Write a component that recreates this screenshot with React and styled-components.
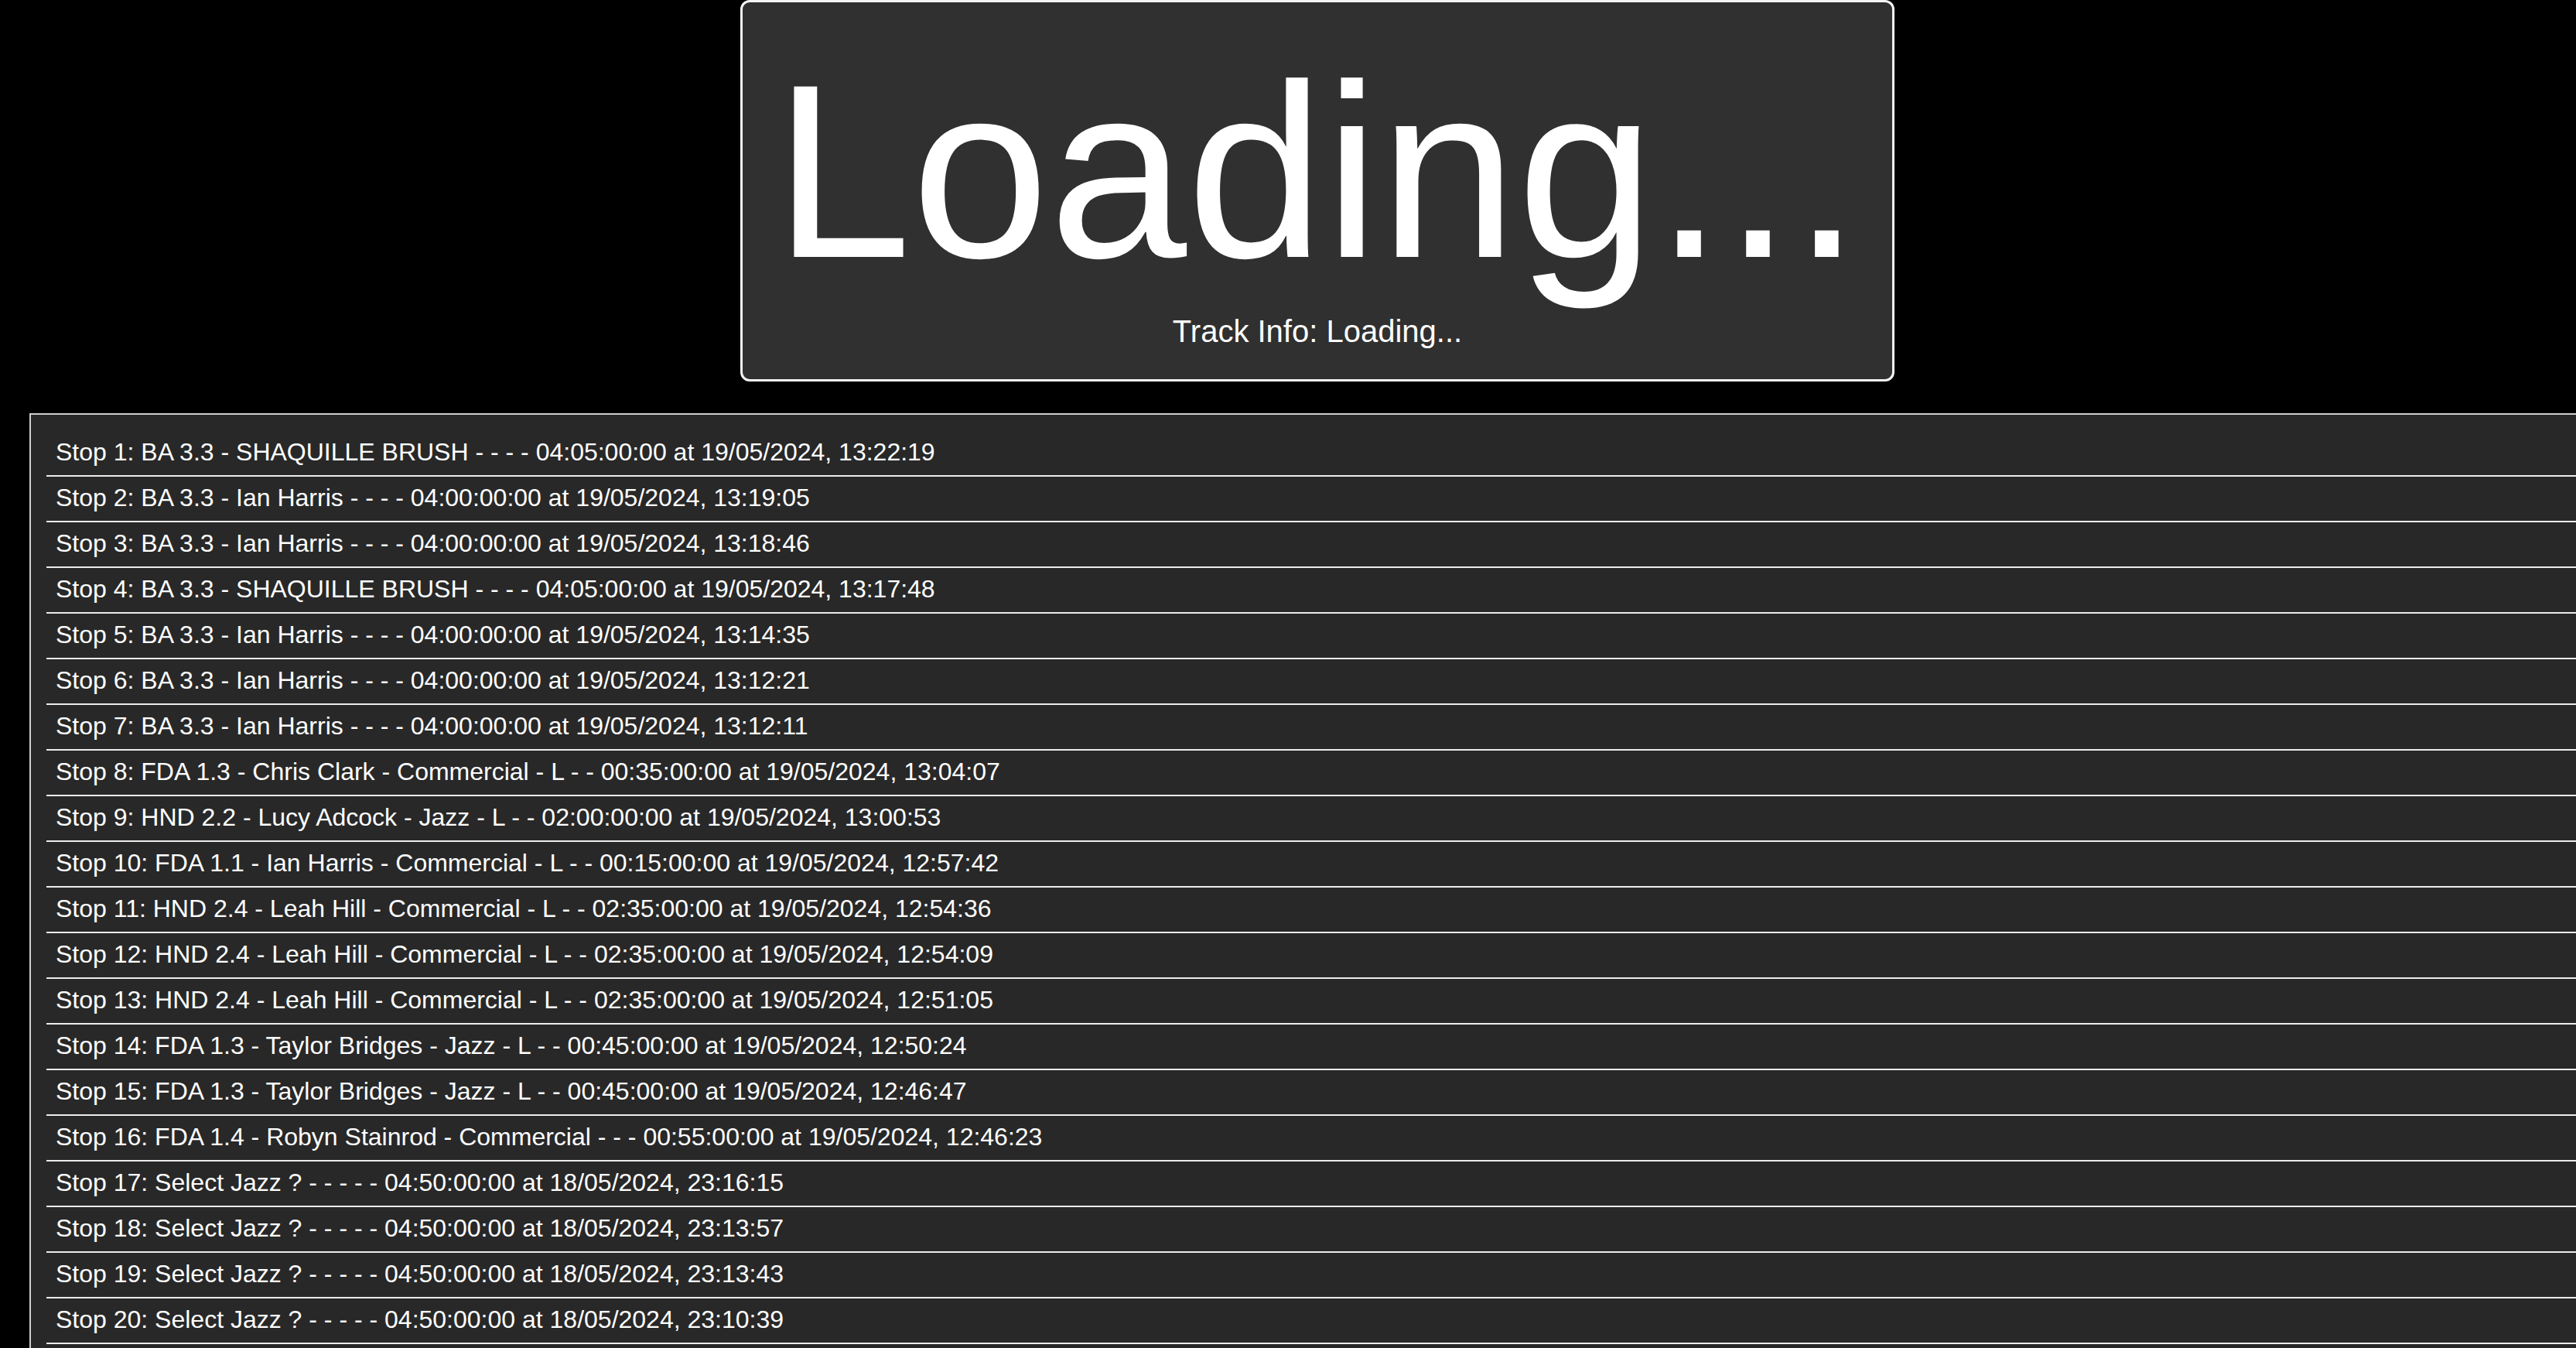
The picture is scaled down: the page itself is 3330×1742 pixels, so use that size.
import React from 'react';
import styled, { createGlobalStyle } from 'styled-components';

const GlobalStyle = createGlobalStyle`
  html, body {
    margin: 0;
    padding: 0;
    background: #000;
    color: #fff;
    font-family: 'Liberation Sans', Arial, Helvetica, sans-serif;
  }
`;

const Page = styled.div`
  width: 3406px;
  display: flex;
  flex-direction: column;
  align-items: center;
`;

const NowPlaying = styled.div`
  box-sizing: border-box;
  padding: 58px 40px 39px;
  background: #303030;
  border: 3px solid #f4f4f4;
  border-radius: 12px;
  text-align: center;
`;

const Title = styled.h1`
  margin: 0;
  font-size: 320px;
  font-weight: normal;
  line-height: 1;
  white-space: nowrap;
`;

const TrackInfo = styled.p`
  margin: 24px 0 0;
  font-size: 40px;
  line-height: 46px;
`;

const StopList = styled.ul`
  box-sizing: border-box;
  align-self: stretch;
  margin: 41px 0 0 38px;
  padding: 21px 0 20px 20px;
  list-style: none;
  background: #282828;
  border: 2px solid #cfcfcf;
  border-right: none;
`;

const Stop = styled.li`
  padding: 9px 12px 11px;
  font-size: 32px;
  line-height: 37px;
  border-bottom: 2px solid #ececec;
  white-space: nowrap;
`;

const stops = [
  'BA 3.3 - SHAQUILLE BRUSH - - - - 04:05:00:00 at 19/05/2024, 13:22:19',
  'BA 3.3 - Ian Harris - - - - 04:00:00:00 at 19/05/2024, 13:19:05',
  'BA 3.3 - Ian Harris - - - - 04:00:00:00 at 19/05/2024, 13:18:46',
  'BA 3.3 - SHAQUILLE BRUSH - - - - 04:05:00:00 at 19/05/2024, 13:17:48',
  'BA 3.3 - Ian Harris - - - - 04:00:00:00 at 19/05/2024, 13:14:35',
  'BA 3.3 - Ian Harris - - - - 04:00:00:00 at 19/05/2024, 13:12:21',
  'BA 3.3 - Ian Harris - - - - 04:00:00:00 at 19/05/2024, 13:12:11',
  'FDA 1.3 - Chris Clark - Commercial - L - - 00:35:00:00 at 19/05/2024, 13:04:07',
  'HND 2.2 - Lucy Adcock - Jazz - L - - 02:00:00:00 at 19/05/2024, 13:00:53',
  'FDA 1.1 - Ian Harris - Commercial - L - - 00:15:00:00 at 19/05/2024, 12:57:42',
  'HND 2.4 - Leah Hill - Commercial - L - - 02:35:00:00 at 19/05/2024, 12:54:36',
  'HND 2.4 - Leah Hill - Commercial - L - - 02:35:00:00 at 19/05/2024, 12:54:09',
  'HND 2.4 - Leah Hill - Commercial - L - - 02:35:00:00 at 19/05/2024, 12:51:05',
  'FDA 1.3 - Taylor Bridges - Jazz - L - - 00:45:00:00 at 19/05/2024, 12:50:24',
  'FDA 1.3 - Taylor Bridges - Jazz - L - - 00:45:00:00 at 19/05/2024, 12:46:47',
  'FDA 1.4 - Robyn Stainrod - Commercial - - - 00:55:00:00 at 19/05/2024, 12:46:23',
  'Select Jazz ? - - - - - 04:50:00:00 at 18/05/2024, 23:16:15',
  'Select Jazz ? - - - - - 04:50:00:00 at 18/05/2024, 23:13:57',
  'Select Jazz ? - - - - - 04:50:00:00 at 18/05/2024, 23:13:43',
  'Select Jazz ? - - - - - 04:50:00:00 at 18/05/2024, 23:10:39',
];

const App = () => (
  <>
    <GlobalStyle />
    <Page>
      <NowPlaying>
        <Title>Loading...</Title>
        <TrackInfo>Track Info: Loading...</TrackInfo>
      </NowPlaying>
      <StopList>
        {stops.map((text, i) => (
          <Stop key={i}>
            Stop {i + 1}: {text}
          </Stop>
        ))}
      </StopList>
    </Page>
  </>
);

export default App;
